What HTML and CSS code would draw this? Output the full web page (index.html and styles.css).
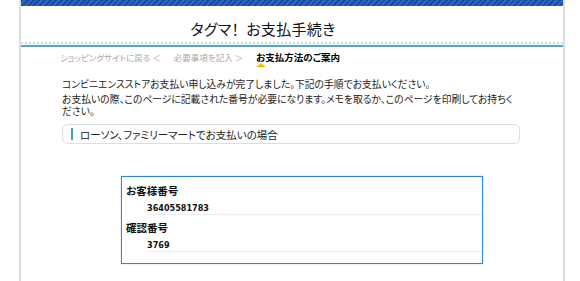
FILE: index.html
```html
<!DOCTYPE html>
<html lang="ja">
<head>
  <meta charset="UTF-8">
  <meta name="viewport" content="width=device-width, initial-scale=1.0">
  <title>タグマ！ お支払手続き</title>
  <link rel="stylesheet" href="styles.css">
</head>
<body>
  <div class="page">
    <div class="band"></div>
    <div class="header">
      <h1><span class="brand">タグマ！</span>お支払手続き</h1>
    </div>
    <!-- 手順 -->
    <div class="steps">
      <span class="step">ショッピングサイトに戻る ＜</span>
      <span class="step">必要事項を記入 ＞</span>
      <span class="step current">お支払方法のご案内</span>
    </div>
    <div class="content">
      <p class="lead">コンビニエンスストアお支払い申し込みが完了しました。下記の手順でお支払いください。</p>
      <p class="note">お支払いの際、このページに記載された番号が必要になります。メモを取るか、このページを印刷してお持ちください。</p>
      <div class="section-title">ローソン、ファミリーマートでお支払いの場合</div>
      <div class="numbers">
        <div class="num-row">
          <div class="num-label">お客様番号</div>
          <div class="num-value">36405581783</div>
        </div>
        <div class="num-row">
          <div class="num-label">確認番号</div>
          <div class="num-value">3769</div>
        </div>
      </div>
    </div>
  </div>
</body>
</html>
```

FILE: styles.css
```css
body {
  margin: 0;
  padding: 0;
  background-color: #fff;
  font-family: "Noto Sans CJK JP", sans-serif;
  font-feature-settings: "palt";
  color: #222;
}
.page {
  margin: 0 15px 0 19px;
  border-left: 2px solid #ddd;
  border-right: 2px solid #ddd;
  min-height: 281px;
}
.band {
  height: 6px;
  background: repeating-linear-gradient(135deg, #1b4aa6 0 2px, #2f63c4 2px 4px);
}
.header {
  height: 28px;
  padding: 8px 58px 0 0;
  border-bottom: 2px dotted #bfe0ea;
  display: flex;
  justify-content: center;
  align-items: center;
}
.header h1 {
  margin: 0;
  font-size: 15px;
  font-weight: normal;
  color: #111;
  letter-spacing: 0.3px;
}
.brand {
  margin-right: 7px;
}
.steps {
  border-top: 2px solid #55a6cc;
  margin-top: 1px;
  padding: 3px 0 0 39px;
  height: 17px;
  font-size: 8.5px;
  display: flex;
  align-items: baseline;
  gap: 13px;
}
.step {
  color: #aaa;
}
.step.current {
  color: #000;
  font-size: 9.5px;
  font-weight: bold;
  position: relative;
}
.step.current::after {
  content: "";
  position: absolute;
  left: 0;
  top: 13px;
  border-left: 5px solid transparent;
  border-right: 5px solid transparent;
  border-bottom: 4px solid #f2c200;
}
.content {
  padding: 12px 43px 0 41px;
  font-size: 9.8px;
}
.content p {
  margin: 0;
  line-height: 11.5px;
}
.lead {
  margin-bottom: 3.5px !important;
}
.note {
  width: 455px;
}
.section-title {
  margin-top: 7px;
  border: 1px solid #ddd;
  border-radius: 6px;
  height: 18px;
  display: flex;
  align-items: center;
  padding-left: 8px;
  font-size: 10.5px;
}
.section-title::before {
  content: "";
  width: 2px;
  height: 12px;
  background-color: #3aa0c0;
  margin-right: 7px;
}
.numbers {
  margin: 32px 37px 0 59px;
  border: 1px solid #2b85ee;
  box-shadow: 0 0 1px rgba(43, 133, 238, 0.6);
  padding: 7px 0 11px 4px;
}
.num-label {
  font-weight: bold;
  font-size: 10.5px;
  line-height: 14px;
  color: #111;
}
.num-value {
  margin: 5px 0 6px 21px;
  padding-bottom: 1px;
  line-height: 10px;
  border-bottom: 1px solid #eee;
  font-family: "DejaVu Sans Condensed", sans-serif;
  font-weight: bold;
  font-size: 9px;
  color: #111;
}
.num-row:last-child .num-value {
  margin-bottom: 0;
}
```
